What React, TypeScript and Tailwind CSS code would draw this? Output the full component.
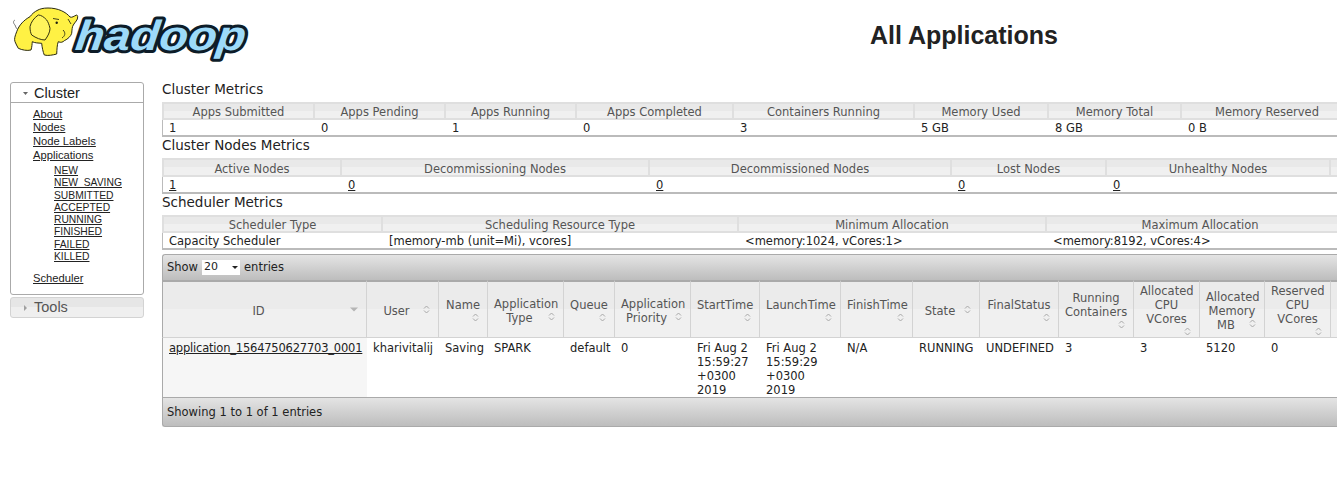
const dejavu = "font-['DejaVu_Sans',sans-serif]";

const clusterMetrics = [
  { title: "Apps Submitted", value: "1", w: 153 },
  { title: "Apps Pending", value: "0", w: 131 },
  { title: "Apps Running", value: "1", w: 131 },
  { title: "Apps Completed", value: "0", w: 157 },
  { title: "Containers Running", value: "3", w: 181 },
  { title: "Memory Used", value: "5 GB", w: 134 },
  { title: "Memory Total", value: "8 GB", w: 133 },
  { title: "Memory Reserved", value: "0 B", w: 172 },
];

const nodeMetrics = [
  { title: "Active Nodes", value: "1", w: 180 },
  { title: "Decommissioning Nodes", value: "0", w: 308 },
  { title: "Decommissioned Nodes", value: "0", w: 302 },
  { title: "Lost Nodes", value: "0", w: 155 },
  { title: "Unhealthy Nodes", value: "0", w: 224 },
  { title: "Rebooted Nodes", value: "0", w: 160 },
];

const schedulerMetrics = [
  { title: "Scheduler Type", value: "Capacity Scheduler", w: 221 },
  { title: "Scheduling Resource Type", value: "[memory-mb (unit=Mi), vcores]", w: 356 },
  { title: "Minimum Allocation", value: "<memory:1024, vCores:1>", w: 308 },
  { title: "Maximum Allocation", value: "<memory:8192, vCores:4>", w: 308 },
];

// iconBelow: the sort icon sits on its own line under the title
const appColumns = [
  { title: "ID", value: "application_1564750627703_0001", w: 205, sort: "desc" },
  { title: "User", value: "kharivitalij", w: 72 },
  { title: "Name", value: "Saving", w: 49 },
  { title: "Application Type", value: "SPARK", w: 76 },
  { title: "Queue", value: "default", w: 51 },
  { title: "Application Priority", value: "0", w: 76 },
  { title: "StartTime", value: "Fri Aug 2 15:59:27 +0300 2019", w: 69 },
  { title: "LaunchTime", value: "Fri Aug 2 15:59:29 +0300 2019", w: 81 },
  { title: "FinishTime", value: "N/A", w: 72 },
  { title: "State", value: "RUNNING", w: 67 },
  { title: "FinalStatus", value: "UNDEFINED", w: 79 },
  { title: "Running Containers", value: "3", w: 75 },
  { title: "Allocated CPU VCores", value: "3", w: 66, iconBelow: true },
  { title: "Allocated Memory MB", value: "5120", w: 65 },
  { title: "Reserved CPU VCores", value: "0", w: 66, iconBelow: true },
  { title: "Reserved Memory MB", value: "0", w: 66 },
];

function SortIcon({ desc }: { desc?: boolean }) {
  if (desc) {
    return (
      <svg width="8" height="5" viewBox="0 0 8 5">
        <path d="M0 0.5h8L4 4.5z" fill="#b5b5b5" />
      </svg>
    );
  }
  return (
    <svg width="7" height="9" viewBox="0 0 7 9">
      <path d="M1 3.5L3.5 1 6 3.5M1 5.5L3.5 8 6 5.5" fill="none" stroke="#a8a8a8" strokeWidth="1" />
    </svg>
  );
}

function MetricsTable({
  rows,
  links,
  headClass,
  dataClass = "pt-px leading-[14px]",
}: {
  rows: { title: string; value: string; w: number }[];
  links?: boolean;
  headClass: string;
  dataClass?: string;
}) {
  return (
    <table
      className={`table-fixed border-separate border-spacing-0 text-[11.5px] ${dejavu}`}
      style={{ width: rows.reduce((n, r) => n + r.w, 0) }}
    >
      <colgroup>
        {rows.map((r) => (
          <col key={r.title} style={{ width: r.w }} />
        ))}
      </colgroup>
      <thead>
        <tr className={`${headClass} bg-[linear-gradient(#e9e9e9_50%,#f0f0f0_50%)]`}>
          {rows.map((r) => (
            <th
              key={r.title}
              className="border-t-2 border-r-2 border-b-2 border-[#dfdfdf] px-0 pt-[2px] pb-0 text-center leading-[12px] font-normal whitespace-nowrap text-[#555] first:border-l-2"
            >
              {r.title}
            </th>
          ))}
        </tr>
      </thead>
      <tbody>
        <tr className="h-[17px]">
          {rows.map((r) => (
            <td
              key={r.title}
              className={`border-b-2 border-[#bbb] px-[6px] pb-0 text-[#222] first:border-l ${dataClass} ${links ? "last:text-[#e8b84a]" : ""}`}
            >
              {links ? <a className="underline">{r.value}</a> : r.value}
            </td>
          ))}
        </tr>
      </tbody>
    </table>
  );
}

function Logo() {
  return (
    <svg width="240" height="62" viewBox="0 0 240 62" className="shrink-0">
      {/* wordmark */}
      <text
        x="70"
        y="47"
        transform="skewX(-7)"
        fontFamily="'Liberation Sans', sans-serif"
        fontWeight="700"
        fontStyle="italic"
        fontSize="42"
        textLength="170"
        lengthAdjust="spacingAndGlyphs"
        fill="#9ddaf9"
        stroke="#0d1c28"
        strokeWidth="6"
        strokeLinejoin="round"
        paintOrder="stroke"
      >
        hadoop
      </text>
      {/* elephant */}
      <path d="M5 22C3 20 3 18 5 17M5 22C6 25 7 26 8 27" fill="none" stroke="#777" strokeWidth="1" />
      <path
        d="M66.7 12C64 13 62 15 60 14C56 9 48 5 38 5C33 5 30 6 28 7C24 9 22 11 20 13.7C14 17 9 22 6.7 28.7C5 33 4 36 5 38.7C6 41 7 43 8.3 45.3C12 47 17 48 21 47C22 44 22 41 22.3 38.7C25 40 28 40 31.7 40.3C32 44 33 49 34.3 52C38 53 43 52 46.7 51C47 46 47 42 48.3 38.7C51 40 53 39 54.3 37.7C58 36 61 33 61.7 30.3C62 27 62 24 63.3 22C65 19 68 17 67.7 13.7C67.5 12.5 67 12 66.7 12Z"
        fill="#fff144"
        stroke="#2b2a10"
        strokeWidth="1"
        strokeLinejoin="round"
      />
      <path
        d="M28.3 12C24 15 21 19 20 23.7C20 27 20.5 30 21.7 32C26 35 31 37 35 37C38 33 40 29 40 25.3C39 21 38 19 36.7 17C34 14 31 12 28.3 12Z"
        fill="#fff45c"
        stroke="#33320f"
        strokeWidth="1"
        strokeLinejoin="round"
      />
      <path d="M43 15.5L49 16.5M58 16L61 21M53 27C56 30 55 33 52 35" fill="none" stroke="#44431a" strokeWidth="1" />
      <circle cx="46.7" cy="19.7" r="1.2" fill="#1c1c10" />
    </svg>
  );
}

function Sidebar() {
  const states = ["NEW", "NEW_SAVING", "SUBMITTED", "ACCEPTED", "RUNNING", "FINISHED", "FAILED", "KILLED"];
  return (
    <aside className="mt-px w-[134px] shrink-0 font-['Liberation_Sans',sans-serif] text-[#222]">
      <div className="h-[213px] rounded-[3px] border border-[#aaa]">
        <div className="flex h-[20px] items-center border-b border-[#aaa] pt-px pl-[12px] text-[14.5px] leading-none">
          <svg width="5" height="3" viewBox="0 0 5 3" className="mr-[6px]">
            <path d="M0 0h5L2.5 3z" fill="#666" />
          </svg>
          Cluster
        </div>
        <ul className="pt-[5px] pl-[22px] text-[11.2px] leading-[13.5px] underline">
          <li>About</li>
          <li className="-mt-px">Nodes</li>
          <li className="mt-px">Node Labels</li>
          <li>Applications</li>
          <li className="mt-[3px] pl-[21px] text-[10.3px] leading-[12.25px]">
            {states.map((s) => (
              <div key={s}>{s}</div>
            ))}
          </li>
          <li className="mt-[9px]">Scheduler</li>
        </ul>
      </div>
      <div className="mt-[2px] flex h-[21px] items-center rounded-[3px] border border-[#d3d3d3] bg-[linear-gradient(#e6e6e6_50%,#efefef_50%)] pl-[13px] text-[14.5px] leading-none text-[#555]">
        <svg width="3" height="6" viewBox="0 0 3 6" className="mr-[7px]">
          <path d="M0 0v6l3-3z" fill="#a0a0a0" />
        </svg>
        Tools
      </div>
    </aside>
  );
}

function AppsTable() {
  return (
    <div className={`w-[1200px] text-[11.5px] ${dejavu} text-[#222]`}>
      <div className="flex h-[26px] items-center rounded-t-[3px] border-t border-l border-[#aaa] bg-[linear-gradient(#e4e4e4,#bdbdbd)] pl-[4px]">
        Show
        <span className="mx-[4px] flex h-[15px] w-[38px] items-center justify-between bg-white pr-[2px] pl-[2px] text-[11px]">
          20
          <svg width="6" height="3" viewBox="0 0 6 3">
            <path d="M0 0h6L3 3z" fill="#222" />
          </svg>
        </span>
        entries
      </div>
      <table
        className="table-fixed border-separate border-spacing-0"
        style={{ width: appColumns.reduce((n, c) => n + c.w, 0) }}
      >
        <colgroup>
          {appColumns.map((c) => (
            <col key={c.title} style={{ width: c.w }} />
          ))}
        </colgroup>
        <thead>
          <tr className="h-[58px] bg-[linear-gradient(#ebebeb_50%,#f0f0f0_50%)]">
            {appColumns.map((c) => (
              <th
                key={c.title}
                className="border-t-2 border-r border-b border-[#d3d3d3] border-t-[#aaa] px-[6px] pt-[2px] pb-0 text-center leading-[14px] font-normal text-[#555] first:border-l first:border-l-[#aaa]"
              >
                {c.title}
                {c.iconBelow && <br />}
                <span className="float-right flex h-[11px] w-[12px] items-center justify-center">
                  <SortIcon desc={c.sort === "desc"} />
                </span>
              </th>
            ))}
          </tr>
        </thead>
        <tbody>
          <tr className="h-[59px]">
            {appColumns.map((c, i) => (
              <td
                key={c.title}
                className={`px-[6px] pt-[3px] pb-0 align-top leading-[14px] last:text-[#e8b84a] ${i === 0 ? "border-l border-[#aaa] bg-[#f6f6f6]" : ""}`}
              >
                {i === 0 ? <a className="tracking-[-0.2px] underline">{c.value}</a> : c.value}
              </td>
            ))}
          </tr>
        </tbody>
      </table>
      <div className="flex h-[30px] items-center rounded-b-[3px] border-t border-b border-l border-[#aaa] bg-[linear-gradient(#e4e4e4,#bdbdbd)] pt-px pl-[4px]">
        Showing 1 to 1 of 1 entries
      </div>
    </div>
  );
}

export default function App() {
  return (
    <div className="h-[486px] w-[1337px] overflow-hidden bg-white">
      <header className="flex h-[71px] pl-[10px]">
        <div className="pt-[3px]">
          <Logo />
        </div>
        <h1 className="ml-[620px] pt-[19px] font-['Liberation_Sans',sans-serif] text-[25px] leading-[32px] font-bold whitespace-nowrap text-[#222]">
          All Applications
        </h1>
      </header>
      <div className="flex gap-[18px] pt-[10px] pl-[10px]">
        <Sidebar />
        <main className="min-w-0 grow">
          <section className={`text-[13.5px] ${dejavu} leading-[16px] text-[#222]`}>
            <h3 className="h-[21px] font-normal">Cluster Metrics</h3>
            <MetricsTable rows={clusterMetrics} headClass="h-[18px]" />
            <h3 className="h-[21px] font-normal">Cluster Nodes Metrics</h3>
            <MetricsTable rows={nodeMetrics} links headClass="h-[19px]" />
            <h3 className="h-[21px] font-normal">Scheduler Metrics</h3>
            <MetricsTable rows={schedulerMetrics} headClass="h-[18px]" dataClass="pt-[2px] leading-[13px]" />
          </section>
          <div className="mt-[4px]">
            <AppsTable />
          </div>
        </main>
      </div>
    </div>
  );
}
